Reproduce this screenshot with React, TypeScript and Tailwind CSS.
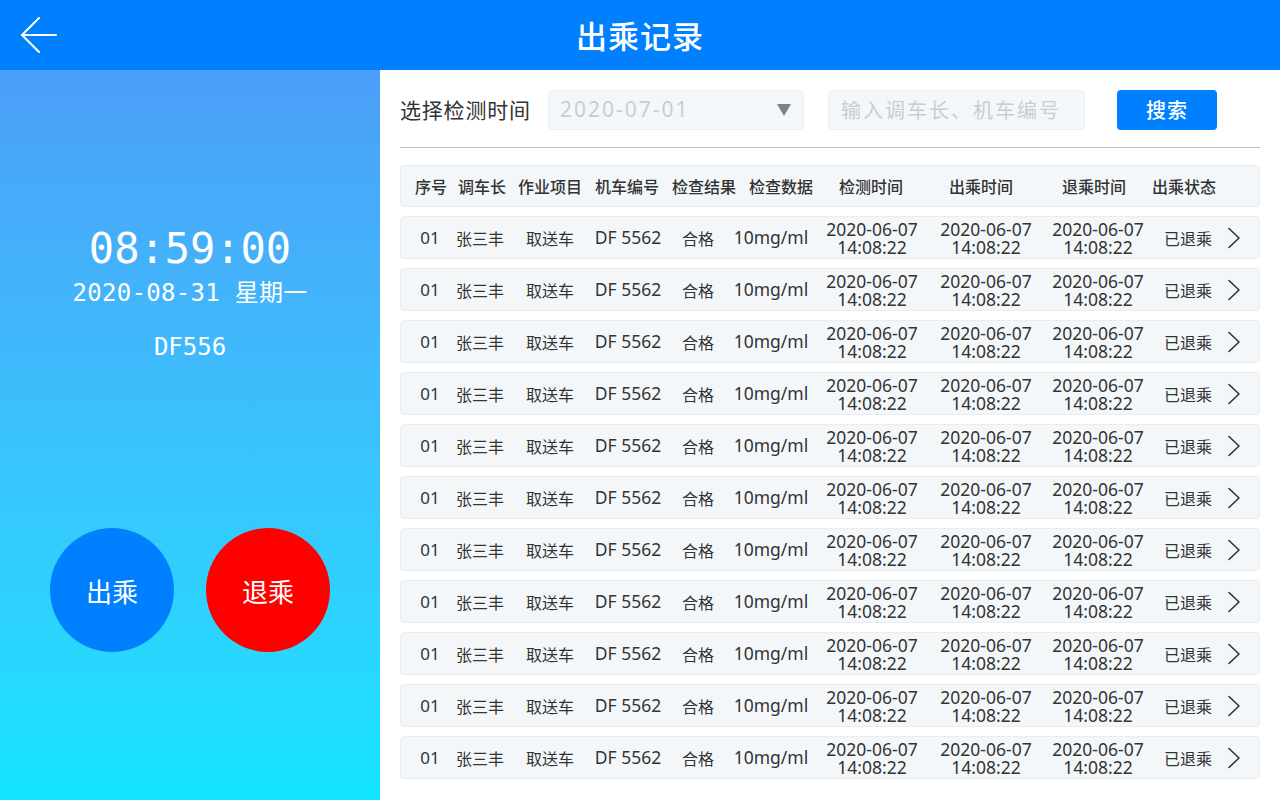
import React from 'react'

const rows = Array.from({ length: 11 }, () => ({
  no: '01',
  leader: '张三丰',
  job: '取送车',
  loco: 'DF 5562',
  result: '合格',
  data: '10mg/ml',
  checkDate: '2020-06-07',
  checkTime: '14:08:22',
  outDate: '2020-06-07',
  outTime: '14:08:22',
  backDate: '2020-06-07',
  backTime: '14:08:22',
  status: '已退乘',
}))

const sans = { fontFamily: '"Noto Sans CJK SC", "Noto Sans", sans-serif' }
const latin = { fontFamily: '"Noto Sans", "Noto Sans CJK SC", sans-serif' }
const mono = { fontFamily: '"DejaVu Sans Mono", "Noto Sans CJK SC", monospace' }

function Stamp({ date, time }: { date: string; time: string }) {
  return (
    <div className="flex flex-col items-center text-[17.5px] leading-[18px]" style={latin}>
      <span>{date}</span>
      <span>{time}</span>
    </div>
  )
}

export default function App() {
  return (
    <div className="w-[1280px] h-[800px] flex flex-col overflow-hidden bg-white" style={sans}>
      {/* Header */}
      <header className="h-[70px] bg-[#0080ff] flex items-center relative shrink-0">
        <button className="absolute left-[18px] top-[15px] w-[40px] h-[40px] flex items-center justify-center">
          <svg width="37" height="38" viewBox="0 0 37 38" fill="none" stroke="white" strokeWidth="2" strokeLinecap="round" strokeLinejoin="round">
            <path d="M36 19H2" />
            <path d="M19 2L2 19l17 17" />
          </svg>
        </button>
        <h1 className="flex-1 text-center text-white text-[31px] font-medium tracking-[1px]">出乘记录</h1>
      </header>

      <div className="flex flex-1 min-h-0">
        {/* Left panel */}
        <aside className="w-[380px] shrink-0 bg-gradient-to-b from-[#4b9ef8] to-[#10e4ff] flex flex-col items-center text-white">
          <div className="mt-[154px] text-[42px] leading-[50px]" style={mono}>08:59:00</div>
          <div className="mt-[4px] text-[24px] leading-[30px] tracking-[0.3px]" style={mono}>2020-08-31 星期一</div>
          <div className="mt-[24px] text-[24px] leading-[30px]" style={mono}>DF556</div>
          <div className="mt-[166px] flex gap-[32px]">
            <button className="w-[124px] h-[124px] rounded-full bg-[#0080ff] text-white text-[26px]">出乘</button>
            <button className="w-[124px] h-[124px] rounded-full bg-[#ff0000] text-white text-[26px]">退乘</button>
          </div>
        </aside>

        {/* Right panel */}
        <main className="flex-1 px-[20px] pt-[20px] overflow-hidden">
          <div className="flex items-center h-[40px]">
            <span className="w-[148px] text-[21px] text-[#333] tracking-[0.8px]">选择检测时间</span>
            <div className="w-[256px] h-[40px] bg-[#f4f7f9] border border-[#edf1f3] rounded-[4px] flex items-center justify-between pl-[11px] pr-[12px]">
              <span className="text-[21px] text-[#c9cdd0] tracking-[2px]" style={latin}>2020-07-01</span>
              <svg width="14" height="12" viewBox="0 0 14 12">
                <path d="M0 0h14L7 12z" fill="#7d8386" />
              </svg>
            </div>
            <div className="ml-[24px] w-[257px] h-[40px] bg-[#f4f7f9] border border-[#edf1f3] rounded-[4px] flex items-center pl-[12px]">
              <span className="text-[20px] text-[#c9cdd0] tracking-[2px]">输入调车长、机车编号</span>
            </div>
            <button className="ml-[32px] w-[100px] h-[40px] bg-[#0080ff] rounded-[4px] text-white text-[20px] font-medium tracking-[1px]">搜索</button>
          </div>

          <div className="mt-[17px] h-px bg-[#bdbdbd]" />

          {/* Table header */}
          <div className="mt-[17px] h-[42px] bg-[#f4f7f9] border border-[#e8edf0] rounded-[4px] grid grid-cols-[40px_62px_74px_80px_74px_80px_100px_120px_106px_74px] pl-[10px] items-center text-[16px] font-medium text-[#333]">
            {['序号', '调车长', '作业项目', '机车编号', '检查结果', '检查数据', '检测时间', '出乘时间', '退乘时间', '出乘状态'].map((h) => (
              <span key={h} className="text-center whitespace-nowrap">{h}</span>
            ))}
          </div>

          {/* Rows */}
          <div className="mt-[9px] flex flex-col gap-[9px]">
            {rows.map((r, i) => (
              <div
                key={i}
                className="h-[43px] bg-[#f4f7f9] border border-[#e8edf0] rounded-[4px] grid grid-cols-[42px_58px_82px_74px_66px_80px_122px_106px_118px_62px_30px] pl-[8px] items-center text-[16px] text-[#333] whitespace-nowrap"
              >
                <span className="text-center text-[17px]" style={latin}>{r.no}</span>
                <span className="text-center">{r.leader}</span>
                <span className="text-center">{r.job}</span>
                <span className="text-center text-[17.5px]" style={latin}>{r.loco}</span>
                <span className="text-center">{r.result}</span>
                <span className="text-center text-[17.5px]" style={latin}>{r.data}</span>
                <Stamp date={r.checkDate} time={r.checkTime} />
                <Stamp date={r.outDate} time={r.outTime} />
                <Stamp date={r.backDate} time={r.backTime} />
                <span className="text-center">{r.status}</span>
                <span className="flex justify-center">
                  <svg width="14" height="22" viewBox="0 0 14 22" fill="none" stroke="#333" strokeWidth="1.6" strokeLinecap="round" strokeLinejoin="round">
                    <path d="M2 1.5L12 11 2 20.5" />
                  </svg>
                </span>
              </div>
            ))}
          </div>
        </main>
      </div>
    </div>
  )
}
